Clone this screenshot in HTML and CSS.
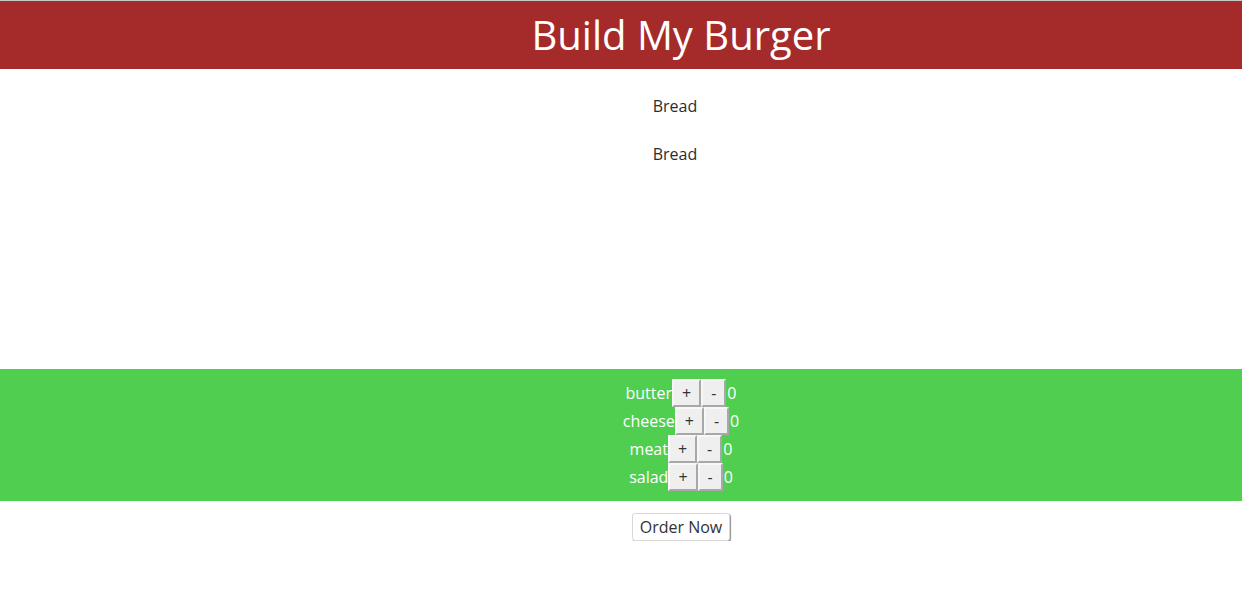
FILE: index.html
```html
<!DOCTYPE html>
<html lang="en">
<head>
<meta charset="utf-8">
<title>Build My Burger</title>
<link rel="stylesheet" href="styles.css">
</head>
<body>
<header class="top-bar">
  <h1 class="title">Build My Burger</h1>
</header>
<section class="burger">
  <div class="ingredient">Bread</div>
  <div class="ingredient">Bread</div>
</section>
<section class="controls">
  <div class="control-row"><span class="label">butter</span><button class="ctrl-btn">+</button><button class="ctrl-btn">-</button><span class="count">0</span></div>
  <div class="control-row"><span class="label">cheese</span><button class="ctrl-btn">+</button><button class="ctrl-btn">-</button><span class="count">0</span></div>
  <div class="control-row"><span class="label">meat</span><button class="ctrl-btn">+</button><button class="ctrl-btn">-</button><span class="count">0</span></div>
  <div class="control-row"><span class="label">salad</span><button class="ctrl-btn">+</button><button class="ctrl-btn">-</button><span class="count">0</span></div>
</section>
<div class="order">
  <button class="order-btn">Order Now</button>
</div>
</body>
</html>
```
FILE: styles.css
```css
* { box-sizing: border-box; }
body {
  margin: 0;
  font-family: "Open Sans", "Noto Sans", sans-serif;
  font-size: 16px;
  color: #333;
  background: #fff;
}
.top-bar {
  background: #a52a2a;
  border-top: 1px solid #c8c8c8;
  height: 69px;
  display: flex;
  align-items: center;
  justify-content: center;
  padding-left: 120px;
}
.title {
  margin: 0;
  color: #fff;
  font-weight: 500;
  font-size: 40px;
  line-height: 1;
}
.burger {
  height: 300px;
  display: flex;
  flex-direction: column;
  align-items: center;
  gap: 26px;
  padding-top: 26px;
  padding-left: 108px;
}
.ingredient {
  line-height: 22px;
  color: #2d2d2d;
}
.controls {
  background: #4fce4f;
  padding: 10px 0 10px 120px;
  display: flex;
  flex-direction: column;
  align-items: center;
}
.control-row {
  display: flex;
  align-items: center;
  height: 28px;
  color: #fff;
}
.ctrl-btn {
  font-family: inherit;
  font-size: 16px;
  height: 28px;
  padding: 0 8px;
  margin: 0;
  background: #efefef;
  color: #333;
  border: 2px solid;
  border-color: #f7f7f7 #a8a8a8 #a8a8a8 #f7f7f7;
  line-height: 24px;
}
.count { margin-left: 1px; }
.order {
  display: flex;
  justify-content: center;
  padding: 12px 0 0 120px;
}
.order-btn {
  font-family: inherit;
  font-size: 16px;
  height: 28px;
  padding: 0 7px;
  background: #fff;
  color: #333;
  border: 1px solid #d8d8d8;
  border-radius: 3px;
  box-shadow: 1px 1px 1px 0 #8f8f8f;
}
```
